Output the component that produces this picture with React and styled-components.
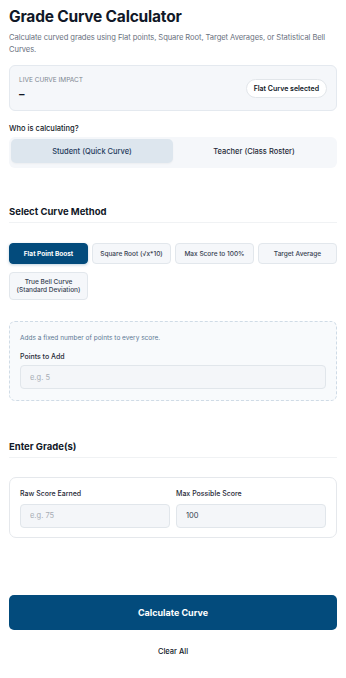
import React, { useState } from "react";
import styled, { createGlobalStyle } from "styled-components";

const GlobalStyle = createGlobalStyle`
  * { box-sizing: border-box; }
  body {
    margin: 0;
    background: #ffffff;
    font-family: Inter, "Noto Sans", "Liberation Sans", sans-serif;
    color: #111827;
  }
`;

const Page = styled.div`
  padding: 8px 9px 20px 9px;
  display: flex;
  flex-direction: column;
`;

const Title = styled.h1`
  margin: 0;
  font-size: 15.5px;
  font-weight: 700;
  letter-spacing: -0.2px;
  color: #111827;
  line-height: 18px;
`;

const Subtitle = styled.p`
  margin: 6px 0 0 0;
  font-size: 7.6px;
  letter-spacing: -0.08px;
  line-height: 12px;
  color: #6b7280;
`;

const ImpactCard = styled.div`
  margin-top: 9px;
  height: 46px;
  background: #f5f7fa;
  border: 1px solid #e4e9ef;
  border-radius: 6px;
  padding: 0 9px 0 9px;
  display: flex;
  align-items: center;
  justify-content: space-between;
`;

const ImpactText = styled.div`
  display: flex;
  flex-direction: column;
  gap: 4px;
`;

const SmallCaps = styled.span`
  font-size: 6.5px;
  color: #7e8791;
  text-transform: uppercase;
`;

const ImpactValue = styled.span`
  font-size: 11px;
  font-weight: 700;
  color: #111827;
  line-height: 12px;
`;

const Pill = styled.span`
  background: #ffffff;
  border: 1px solid #e2e6ea;
  border-radius: 999px;
  padding: 4px 7px;
  font-size: 7px;
  font-weight: 600;
  color: #111827;
`;

const Label = styled.div`
  font-size: 7.5px;
  font-weight: 500;
  color: #111827;
  margin-top: ${(p) => p.$mt || 0}px;
`;

const Toggle = styled.div`
  margin-top: 4px;
  background: #f5f7fa;
  border-radius: 6px;
  padding: 2px 2px 5px 2px;
  display: grid;
  grid-template-columns: 1fr 1fr;
  height: 31px;
`;

const ToggleItem = styled.button`
  border: none;
  border-radius: 5px;
  font-family: inherit;
  font-size: 7.5px;
  font-weight: 500;
  background: ${(p) => (p.$active ? "#dde6ee" : "transparent")};
  color: ${(p) => (p.$active ? "#1f3b5c" : "#1f2937")};
  box-shadow: ${(p) => (p.$active ? "0 1px 2px rgba(0,0,0,0.04)" : "none")};
  cursor: pointer;
`;

const SectionTitle = styled.h2`
  margin: ${(p) => p.$mt}px 0 0 0;
  font-size: 9.5px;
  font-weight: 700;
  color: #111827;
  padding-bottom: 5px;
  border-bottom: 1px solid #f0f2f4;
`;

const MethodGrid = styled.div`
  margin-top: 20px;
  display: grid;
  grid-template-columns: repeat(4, 1fr);
  gap: 8px 4px;
`;

const MethodButton = styled.button`
  font-family: inherit;
  height: ${(p) => (p.$tall ? 28 : 21)}px;
  border-radius: 4px;
  border: 1px solid ${(p) => (p.$active ? "#034b7c" : "#e2e7ec")};
  background: ${(p) => (p.$active ? "#034b7c" : "#f5f7fa")};
  color: ${(p) => (p.$active ? "#ffffff" : "#374151")};
  font-size: 6.5px;
  font-weight: ${(p) => (p.$active ? 700 : 500)};
  line-height: 8px;
  padding: 0 2px;
  box-shadow: ${(p) => (p.$active ? "0 1px 3px rgba(3,75,124,0.25)" : "none")};
  cursor: pointer;
`;

const DashedBox = styled.div`
  margin-top: 21px;
  height: 80px;
  border: 1px dashed #cfdbe6;
  border-radius: 6px;
  background: #f8fafc;
  padding: 12px 10px 10px 10px;
  display: flex;
  flex-direction: column;
`;

const Hint = styled.div`
  font-size: 6.5px;
  color: #5c7894;
`;

const Input = styled.input`
  width: 100%;
  height: 24px;
  border: 1px solid #e1e6eb;
  border-radius: 4px;
  background: #f4f6f9;
  font-family: inherit;
  font-size: 7.5px;
  padding: 0 9px;
  color: #374151;
  outline: none;
  &::placeholder { color: #a7adb5; }
`;

const FieldLabel = styled.label`
  font-size: 7px;
  font-weight: 500;
  color: #1f2937;
  display: block;
  margin-top: ${(p) => p.$mt || 0}px;
  margin-bottom: 4px;
`;

const GradeCard = styled.div`
  margin-top: 19px;
  height: 61px;
  border: 1px solid #e5e8ec;
  border-radius: 7px;
  padding: 11px 10px 10px 10px;
  display: grid;
  grid-template-columns: 1fr 1fr;
  gap: 6px;
`;

const PrimaryButton = styled.button`
  margin-top: 57px;
  height: 35px;
  border: none;
  border-radius: 5px;
  background: #034b7c;
  color: #ffffff;
  font-family: inherit;
  font-size: 9px;
  font-weight: 700;
  cursor: pointer;
`;

const LinkButton = styled.button`
  margin-top: 16px;
  align-self: center;
  border: none;
  background: none;
  font-family: inherit;
  font-size: 7.5px;
  font-weight: 500;
  color: #111827;
  cursor: pointer;
`;

const methods = [
  "Flat Point Boost",
  "Square Root (√x*10)",
  "Max Score to 100%",
  "Target Average",
  "True Bell Curve\n(Standard Deviation)",
];

export default function App() {
  const [role, setRole] = useState("student");
  const [method, setMethod] = useState(0);

  return (
    <Page>
      <GlobalStyle />
      <Title>Grade Curve Calculator</Title>
      <Subtitle>
        Calculate curved grades using Flat points, Square Root, Target Averages, or Statistical Bell
        Curves.
      </Subtitle>

      <ImpactCard>
        <ImpactText>
          <SmallCaps>Live Curve Impact</SmallCaps>
          <ImpactValue>–</ImpactValue>
        </ImpactText>
        <Pill>Flat Curve selected</Pill>
      </ImpactCard>

      <Label $mt={13}>Who is calculating?</Label>
      <Toggle>
        <ToggleItem $active={role === "student"} onClick={() => setRole("student")}>
          Student (Quick Curve)
        </ToggleItem>
        <ToggleItem $active={role === "teacher"} onClick={() => setRole("teacher")}>
          Teacher (Class Roster)
        </ToggleItem>
      </Toggle>

      <SectionTitle $mt={38}>Select Curve Method</SectionTitle>
      <MethodGrid>
        {methods.map((m, i) => (
          <MethodButton
            key={m}
            $active={method === i}
            $tall={i === 4}
            onClick={() => setMethod(i)}
          >
            {m.split("\n").map((line, j) => (
              <div key={j}>{line}</div>
            ))}
          </MethodButton>
        ))}
      </MethodGrid>

      <DashedBox>
        <Hint>Adds a fixed number of points to every score.</Hint>
        <FieldLabel $mt={10}>Points to Add</FieldLabel>
        <Input placeholder="e.g. 5" />
      </DashedBox>

      <SectionTitle $mt={40}>Enter Grade(s)</SectionTitle>
      <GradeCard>
        <div>
          <FieldLabel>Raw Score Earned</FieldLabel>
          <Input placeholder="e.g. 75" />
        </div>
        <div>
          <FieldLabel>Max Possible Score</FieldLabel>
          <Input defaultValue="100" />
        </div>
      </GradeCard>

      <PrimaryButton>Calculate Curve</PrimaryButton>
      <LinkButton>Clear All</LinkButton>
    </Page>
  );
}
